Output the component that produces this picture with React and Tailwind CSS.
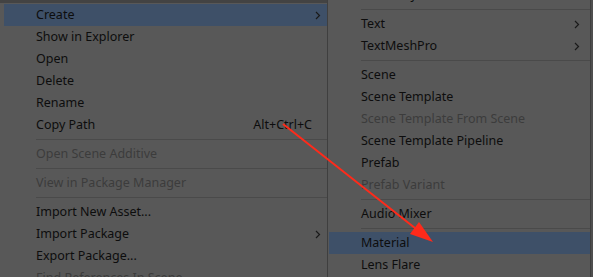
import React from "react";

const font = { fontFamily: '"Noto Sans", "Open Sans", sans-serif' };

function Chevron() {
  return (
    <svg width="6" height="9" viewBox="0 0 6 9" className="shrink-0">
      <polyline points="1,1 4.5,4.5 1,8" fill="none" stroke="#1a1a1a" strokeWidth="1.2" />
    </svg>
  );
}

function Row({ label, disabled, active, sub, shortcut, right }) {
  return (
    <div
      className={`shrink-0 h-[22px] flex items-center pl-[32px] text-[12.5px] leading-none ${
        active ? "bg-[#3e5068]" : ""
      } ${disabled ? "text-[#3c3c3c]" : "text-[#0d0d0d]"} ${right ? "pr-[10px]" : "pr-[6px]"}`}
    >
      <span className="flex-1 whitespace-nowrap">{label}</span>
      {shortcut && <span className="mr-[9px] whitespace-nowrap">{shortcut}</span>}
      {sub && <Chevron />}
    </div>
  );
}

function Sep() {
  return (
    <div className="shrink-0 h-[7px] flex items-center">
      <div className="ml-[32px] flex-1 h-px bg-[#4a4a4a]" />
    </div>
  );
}

export default function App() {
  return (
    <div className="relative w-[593px] h-[277px] overflow-hidden bg-[#4e4e4e] flex" style={font}>
      <div className="w-[327px] h-full overflow-hidden bg-[#585858] border-t-[3px] border-[#434343] pt-[1px] pl-[4px] flex flex-col">
        <Row label="Create" active sub />
        <Row label="Show in Explorer" />
        <Row label="Open" />
        <Row label="Delete" />
        <Row label="Rename" />
        <Row label="Copy Path" shortcut="Alt+Ctrl+C" />
        <Sep />
        <Row label="Open Scene Additive" disabled />
        <Sep />
        <Row label="View in Package Manager" disabled />
        <Sep />
        <Row label="Import New Asset..." />
        <Row label="Import Package" sub />
        <Row label="Export Package..." />
        <Row label="Find References In Scene" disabled />
      </div>
      <div className="w-[264px] h-full overflow-hidden bg-[#585858] border-l border-r border-[#3f3f3f] pl-[1px] flex flex-col">
        <div className="shrink-0 -mt-[16px]">
          <Row label="Assembly Definition Reference" />
        </div>
        <Sep />
        <Row label="Text" sub right />
        <Row label="TextMeshPro" sub right />
        <Sep />
        <Row label="Scene" />
        <Row label="Scene Template" />
        <Row label="Scene Template From Scene" disabled />
        <Row label="Scene Template Pipeline" />
        <Row label="Prefab" />
        <Row label="Prefab Variant" disabled />
        <Sep />
        <Row label="Audio Mixer" />
        <Sep />
        <Row label="Material" active />
        <Row label="Lens Flare" />
      </div>
      <svg className="absolute inset-0 pointer-events-none" width="593" height="277">
        <line x1="283" y1="124" x2="420" y2="232" stroke="#ff2a1a" strokeWidth="2" />
        <polygon points="433,242 410,234 419,222" fill="#ff2a1a" />
      </svg>
    </div>
  );
}
